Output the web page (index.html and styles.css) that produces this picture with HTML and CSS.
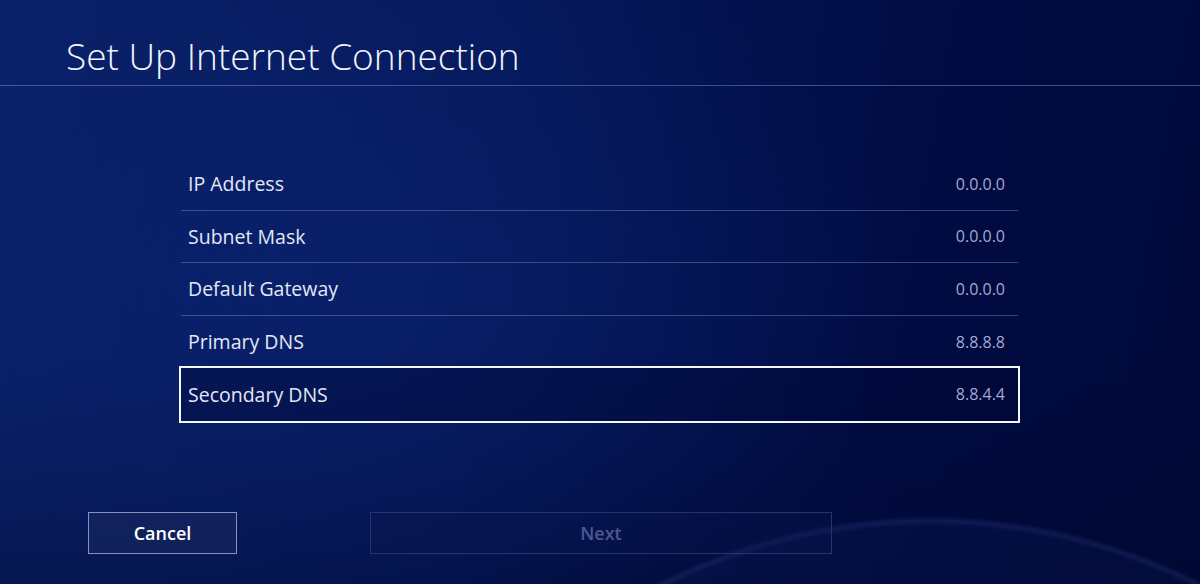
FILE: index.html
```html
<!DOCTYPE html>
<html lang="en">
<head>
<meta charset="utf-8">
<title>Set Up Internet Connection</title>
<link rel="stylesheet" href="styles.css">
</head>
<body>
<div class="screen">
  <header class="header">
    <h1 class="title">Set Up Internet Connection</h1>
  </header>
  <main class="content">
    <ul class="settings">
      <li class="row"><span class="label">IP Address</span><span class="value">0.0.0.0</span></li>
      <li class="row"><span class="label">Subnet Mask</span><span class="value">0.0.0.0</span></li>
      <li class="row"><span class="label">Default Gateway</span><span class="value">0.0.0.0</span></li>
      <li class="row"><span class="label">Primary DNS</span><span class="value">8.8.8.8</span></li>
      <li class="row selected"><span class="label">Secondary DNS</span><span class="value">8.8.4.4</span></li>
    </ul>
  </main>
  <footer class="actions">
    <button class="btn cancel">Cancel</button>
    <button class="btn next" disabled>Next</button>
  </footer>
</div>
</body>
</html>
```
FILE: styles.css
```css
html, body {
  margin: 0;
  padding: 0;
  width: 1200px;
  height: 584px;
  overflow: hidden;
}
body {
  font-family: "Open Sans", "Noto Sans", "Liberation Sans", sans-serif;
  color: #fff;
  background-color: #020d44;
  background-image:
    radial-gradient(circle at 930px 1116px, rgba(20,40,110,0.12) 0, rgba(20,40,110,0.14) 590px, rgba(60,90,170,0.22) 595px, rgba(0,0,0,0) 600px),
    radial-gradient(ellipse 600px 380px at 300px 280px, rgba(10,36,115,0.55), rgba(10,36,115,0) 100%),
    linear-gradient(180deg, rgba(0,0,0,0) 60%, rgba(0,5,40,0.35) 100%),
    linear-gradient(100deg, #0a2168 0%, #05185a 40%, #010b42 75%, #000939 100%);
}
.screen {
  width: 1200px;
  height: 584px;
  display: flex;
  flex-direction: column;
}
.header {
  height: 86px;
  border-bottom: 1px solid rgba(110, 130, 200, 0.55);
  box-sizing: border-box;
  padding-left: 66px;
  display: flex;
  align-items: flex-end;
}
.title {
  margin: 0 0 5px 0;
  font-weight: 300;
  font-size: 37px;
  line-height: 48px;
  letter-spacing: 0;
  color: #f2f4fa;
}
.content {
  padding-top: 72px;
  padding-left: 181px;
}
.settings {
  list-style: none;
  margin: 0;
  padding: 0;
  width: 837px;
}
.row {
  height: 52.5px;
  box-sizing: border-box;
  display: flex;
  align-items: center;
  justify-content: space-between;
  padding: 0 13px 0 7px;
  border-bottom: 1px solid rgba(120, 140, 200, 0.45);
}
.row.selected {
  border-bottom: none;
  outline: 2.5px solid #f4f6fb;
  outline-offset: 0;
  background: rgba(0, 5, 50, 0.35);
}
.row:nth-child(4) { border-bottom: none; }
.label {
  font-size: 19.5px;
  font-weight: 400;
  color: #e3e7f4;
}
.value {
  font-size: 16px;
  color: #a3aad0;
}
.actions {
  display: flex;
  gap: 133px;
  padding-left: 88px;
  margin-top: 91px;
}
.btn {
  font-family: "Open Sans", "Noto Sans", "Liberation Sans", sans-serif;
  height: 42px;
  font-size: 18px;
  font-weight: 600;
  box-sizing: border-box;
  padding: 0;
  cursor: pointer;
}
.cancel {
  width: 149px;
  color: #ffffff;
  background: rgba(30, 45, 100, 0.45);
  border: 1.5px solid #8790bf;
}
.next {
  width: 462px;
  color: #4b5791;
  background: rgba(10, 25, 80, 0.25);
  border: 1px solid #26336e;
}
```
